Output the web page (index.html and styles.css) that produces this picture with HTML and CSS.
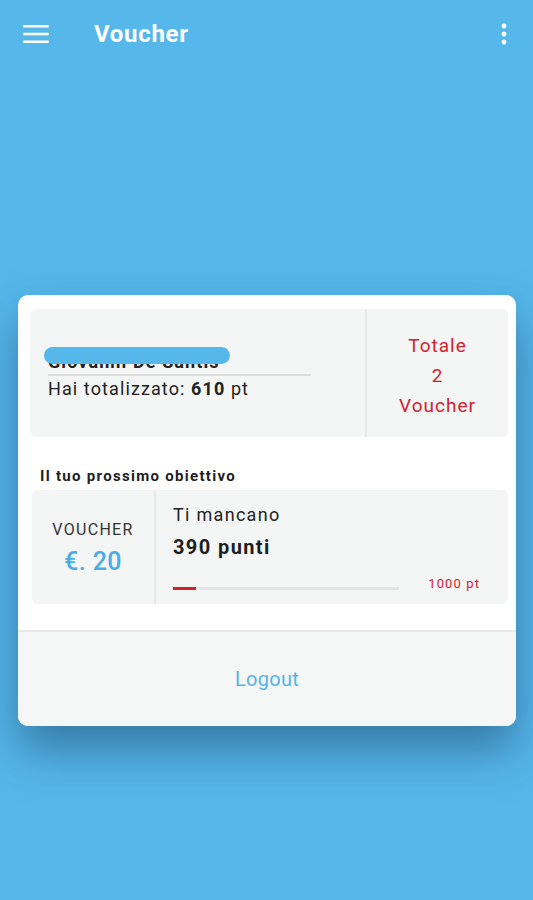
FILE: index.html
```html
<!DOCTYPE html>
<html lang="it">
  <head>
    <meta charset="UTF-8" />
    <meta name="viewport" content="width=device-width, initial-scale=1.0" />
    <title>Voucher</title>
    <link rel="stylesheet" href="styles.css">
  </head>
  <body>
    <header class="topbar">
      <svg class="menu-icon" width="26" height="20" viewBox="0 0 26 20">
        <rect x="0" y="1" width="26" height="2.6" rx="1" fill="#fff" />
        <rect x="0" y="8.7" width="26" height="2.6" rx="1" fill="#fff" />
        <rect x="0" y="16.4" width="26" height="2.6" rx="1" fill="#fff" />
      </svg>
      <h1 class="title">Voucher</h1>
      <svg class="more-icon" width="8" height="22" viewBox="0 0 8 22">
        <circle cx="4" cy="3" r="2.4" fill="#fff" />
        <circle cx="4" cy="11" r="2.4" fill="#fff" />
        <circle cx="4" cy="19" r="2.4" fill="#fff" />
      </svg>
    </header>

    <main class="content">
      <section class="card">
        <div class="card-body">
          <div class="summary">
            <div class="user">
              <div class="user-name">
                <span>Giovanni De Santis</span>
                <span class="redact"></span>
              </div>
              <div class="user-points">Hai totalizzato: <b>610</b> pt</div>
            </div>
            <div class="total">
              <span>Totale</span>
              <span>2</span>
              <span>Voucher</span>
            </div>
          </div>

          <h2 class="goal-title">Il tuo prossimo obiettivo</h2>

          <div class="goal">
            <div class="goal-voucher">
              <span class="goal-label">VOUCHER</span>
              <span class="goal-value">€. 20</span>
            </div>
            <div class="goal-info">
              <div class="goal-missing">Ti mancano</div>
              <div class="goal-points">390 punti</div>
              <div class="progress-row">
                <div class="progress">
                  <div class="progress-fill" style="width: 10%"></div>
                </div>
                <span class="progress-max">1000 pt</span>
              </div>
            </div>
          </div>
        </div>

        <div class="card-footer">
          <a class="logout" href="#">Logout</a>
        </div>
      </section>
    </main>
  </body>
</html>
```

FILE: styles.css
```css
* {
  margin: 0;
  padding: 0;
  box-sizing: border-box;
}

body {
  font-family: Roboto, "Noto Sans", Arial, sans-serif;
  background-color: #56b7ea;
  color: #1e1e1e;
  min-height: 900px;
  letter-spacing: 1.1px;
}

.topbar {
  display: flex;
  align-items: center;
  height: 68px;
  padding: 0 0 0 23px;
}

.menu-icon {
  display: block;
}

.title {
  flex: 1;
  margin-left: 45px;
  color: #fff;
  font-size: 24px;
  font-weight: 700;
  letter-spacing: 0.7px;
}

.more-icon {
  display: block;
  margin-right: 25px;
}

.content {
  padding: 227px 17px 0 18px;
}

.card {
  background-color: #fff;
  border-radius: 10px;
  overflow: hidden;
  box-shadow: 0 24px 46px rgba(20, 62, 100, 0.5);
}

.card-body {
  padding: 14px 8px 26px 12px;
}

.summary {
  display: flex;
  height: 128px;
  background-color: #f4f5f5;
  border-radius: 6px;
}

.user {
  width: 337px;
  display: flex;
  flex-direction: column;
  justify-content: center;
  padding: 7px 0 0 18px;
  border-right: 2px solid #e6e8e8;
}

.user-name {
  position: relative;
  width: 263px;
  height: 25px;
  font-size: 18px;
  font-weight: 700;
  line-height: 22px;
  color: #222;
  border-bottom: 2px solid #dcdede;
}

.redact {
  position: absolute;
  left: -4px;
  top: -4px;
  width: 186px;
  height: 17px;
  border-radius: 9px;
  background-color: #56b7ea;
}

.user-points {
  font-size: 18px;
  line-height: 26px;
  color: #222;
}

.total {
  flex: 1;
  display: flex;
  flex-direction: column;
  align-items: center;
  justify-content: center;
  color: #d0222c;
  font-size: 19px;
  letter-spacing: 1px;
  line-height: 30px;
  padding-top: 5px;
}

.goal-title {
  font-size: 15px;
  font-weight: 700;
  letter-spacing: 1.3px;
  color: #1e1e1e;
  line-height: 20px;
  margin: 29px 0 4px 10px;
}

.goal {
  display: flex;
  height: 114px;
  margin-left: 2px;
  background-color: #f4f5f5;
  border-radius: 6px;
}

.goal-voucher {
  width: 124px;
  display: flex;
  flex-direction: column;
  align-items: center;
  justify-content: center;
  border-right: 2px solid #e6e8e8;
  padding-top: 4px;
}

.goal-label {
  font-size: 16px;
  letter-spacing: 1.3px;
  color: #333;
  line-height: 22px;
}

.goal-value {
  font-size: 25px;
  font-weight: 500;
  letter-spacing: 0.4px;
  color: #49ade3;
  line-height: 34px;
  margin-top: 4px;
}

.goal-info {
  flex: 1;
  padding: 13px 28px 0 17px;
}

.goal-missing {
  font-size: 18px;
  letter-spacing: 1.3px;
  line-height: 24px;
  color: #222;
}

.goal-points {
  font-size: 20px;
  font-weight: 700;
  letter-spacing: 1.4px;
  line-height: 28px;
  margin-top: 6px;
  color: #1e1e1e;
}

.progress-row {
  display: flex;
  align-items: center;
  margin-top: 15px;
}

.progress {
  width: 226px;
  height: 3px;
  background-color: #e4e6e6;
  margin-top: 10px;
}

.progress-fill {
  height: 3px;
  background-color: #d0222c;
}

.progress-max {
  margin-left: auto;
  font-size: 13px;
  color: #d0222c;
}

.card-footer {
  height: 96px;
  display: flex;
  align-items: center;
  justify-content: center;
  background-color: #f5f7f7;
  border-top: 2px solid #e8eaea;
}

.logout {
  font-size: 20px;
  letter-spacing: 0.3px;
  color: #56b3e6;
  text-decoration: none;
}
```
